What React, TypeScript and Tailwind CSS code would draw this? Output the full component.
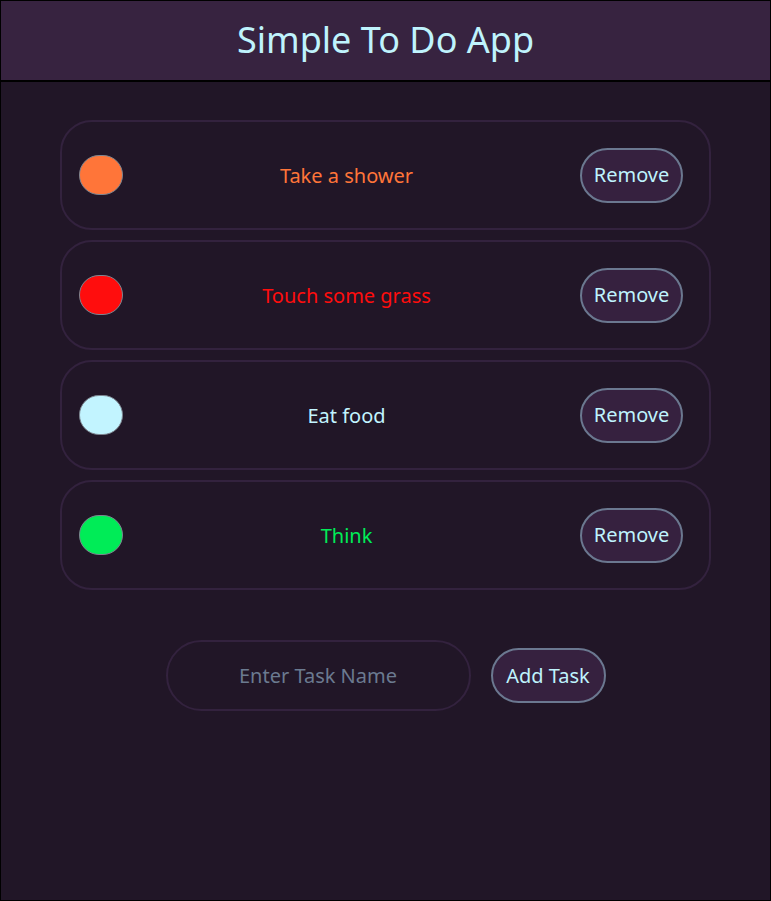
import React from "react";

const tasks = [
  { name: "Take a shower", color: "#ff7539" },
  { name: "Touch some grass", color: "#ff0d0d" },
  { name: "Eat food", color: "#c2f4ff" },
  { name: "Think", color: "#00ec57" },
];

export default function App() {
  return (
    <div
      className="h-[901px] w-[771px] border border-black bg-[#211627] flex flex-col"
      style={{ fontFamily: "'Noto Sans', sans-serif" }}
    >
      <header className="h-[81px] shrink-0 bg-[#372340] border-b-2 border-black flex items-center justify-center">
        <h1
          className="text-[36px] text-[#bff3fd] leading-none pb-[1px]"
          style={{ fontFamily: "'Noto Sans', sans-serif" }}
        >
          Simple To Do App
        </h1>
      </header>
      <main className="flex flex-col items-center pt-[38px]">
        <div className="flex flex-col gap-[10px] w-[651px]">
          {tasks.map((t) => (
            <div
              key={t.name}
              className="h-[110px] rounded-[32px] border-2 border-[#33223e] flex items-center pl-[17px] pr-[26px]"
            >
              <div
                className="w-[44px] h-[40px] rounded-full border border-[#7d8590] shrink-0"
                style={{ backgroundColor: t.color }}
              />
              <div
                className="flex-1 text-center text-[20px] pr-[10px] pt-[1px]"
                style={{ color: t.color }}
              >
                {t.name}
              </div>
              <button className="w-[103px] h-[55px] rounded-full border-2 border-[#6b7890] bg-[#36213f] text-[#bff3fd] text-[20px]">
                Remove
              </button>
            </div>
          ))}
        </div>
        <div className="flex items-center gap-[20px] mt-[50px]">
          <input
            placeholder="Enter Task Name"
            className="w-[305px] h-[71px] rounded-full border-2 border-[#33223e] bg-transparent text-center text-[20px] text-[#bff3fd] placeholder:text-[#6b7a90] outline-none"
          />
          <button className="w-[115px] h-[55px] rounded-full border-2 border-[#6b7890] bg-[#36213f] text-[#bff3fd] text-[20px]">
            Add Task
          </button>
        </div>
      </main>
    </div>
  );
}
